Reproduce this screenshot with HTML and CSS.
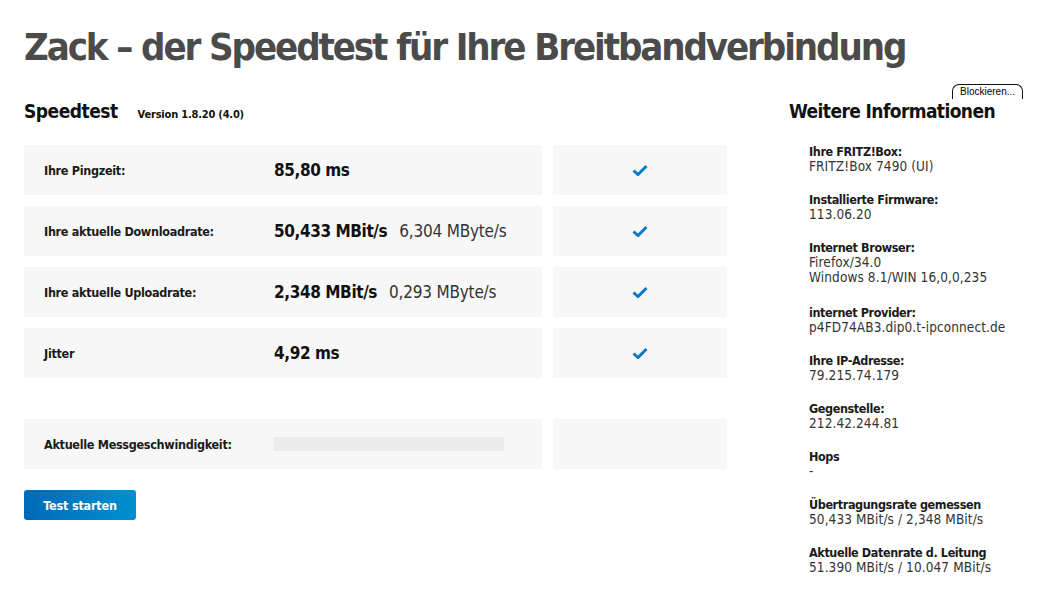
FILE: index.html
```html
<!DOCTYPE html>
<html lang="de">
<head>
<meta charset="utf-8">
<title>Zack – der Speedtest</title>
<link rel="stylesheet" href="styles.css">
</head>
<body>
<h1 class="title">Zack – der Speedtest für Ihre Breitbandverbindung</h1>
<div class="page">
  <main class="main">
    <div class="head">
      <h2 class="h2">Speedtest</h2>
      <span class="version">Version 1.8.20 (4.0)</span>
    </div>
    <div class="rows">
      <div class="row">
        <div class="cell-l"><span class="label">Ihre Pingzeit:</span><span class="val"><b>85,80 ms</b></span></div>
        <div class="cell-r"><svg class="check" viewBox="0 0 16 12" width="16" height="12"><path d="M1.5 6.5 L6 10.5 L14.5 2" fill="none" stroke="#0a78c4" stroke-width="3"/></svg></div>
      </div>
      <div class="row">
        <div class="cell-l"><span class="label">Ihre aktuelle Downloadrate:</span><span class="val"><b>50,433 MBit/s</b><span class="sec">6,304 MByte/s</span></span></div>
        <div class="cell-r"><svg class="check" viewBox="0 0 16 12" width="16" height="12"><path d="M1.5 6.5 L6 10.5 L14.5 2" fill="none" stroke="#0a78c4" stroke-width="3"/></svg></div>
      </div>
      <div class="row">
        <div class="cell-l"><span class="label">Ihre aktuelle Uploadrate:</span><span class="val"><b>2,348 MBit/s</b><span class="sec">0,293 MByte/s</span></span></div>
        <div class="cell-r"><svg class="check" viewBox="0 0 16 12" width="16" height="12"><path d="M1.5 6.5 L6 10.5 L14.5 2" fill="none" stroke="#0a78c4" stroke-width="3"/></svg></div>
      </div>
      <div class="row">
        <div class="cell-l"><span class="label">Jitter</span><span class="val"><b>4,92 ms</b></span></div>
        <div class="cell-r"><svg class="check" viewBox="0 0 16 12" width="16" height="12"><path d="M1.5 6.5 L6 10.5 L14.5 2" fill="none" stroke="#0a78c4" stroke-width="3"/></svg></div>
      </div>
      <div class="row row-speed">
        <div class="cell-l"><span class="label">Aktuelle Messgeschwindigkeit:</span><span class="val"><span class="bar"></span></span></div>
        <div class="cell-r"></div>
      </div>
    </div>
    <button class="btn">Test starten</button>
  </main>
  <aside class="side">
    <span class="block-btn">Blockieren...</span>
    <h2 class="h2">Weitere Informationen</h2>
    <dl class="info">
      <div class="item"><dt>Ihre FRITZ!Box:</dt><dd>FRITZ!Box 7490 (UI)</dd></div>
      <div class="item"><dt>Installierte Firmware:</dt><dd>113.06.20</dd></div>
      <div class="item item-tall"><dt>Internet Browser:</dt><dd>Firefox/34.0</dd><dd>Windows 8.1/WIN 16,0,0,235</dd></div>
      <div class="item"><dt>internet Provider:</dt><dd>p4FD74AB3.dip0.t-ipconnect.de</dd></div>
      <div class="item"><dt>Ihre IP-Adresse:</dt><dd>79.215.74.179</dd></div>
      <div class="item"><dt>Gegenstelle:</dt><dd>212.42.244.81</dd></div>
      <div class="item"><dt>Hops</dt><dd>-</dd></div>
      <div class="item"><dt>Übertragungsrate gemessen</dt><dd>50,433 MBit/s / 2,348 MBit/s</dd></div>
      <div class="item"><dt>Aktuelle Datenrate d. Leitung</dt><dd>51.390 MBit/s / 10.047 MBit/s</dd></div>
    </dl>
  </aside>
</div>
</body>
</html>
```
FILE: styles.css
```css
* { box-sizing: border-box; }
html, body { margin: 0; padding: 0; background: #fff; }
body {
  font-family: "DejaVu Sans Condensed", "DejaVu Sans", sans-serif;
  color: #1a1a1a;
  width: 1042px;
  height: 599px;
  overflow: hidden;
}
.title {
  margin: 0;
  padding: 23px 0 0 24px;
  font-size: 38px;
  line-height: 48px;
  font-weight: bold;
  color: #4b4b4b;
  letter-spacing: -2.1px;
  white-space: nowrap;
}
.page {
  display: flex;
  padding: 0 0 0 24px;
  margin-top: 27px;
}
.main { width: 703px; }
.head {
  display: flex;
  align-items: baseline;
  gap: 20px;
  height: 27px;
}
.h2 {
  margin: 0;
  font-size: 19px;
  line-height: 27px;
  font-weight: bold;
  color: #111;
  letter-spacing: -0.5px;
  white-space: nowrap;
}
.version {
  font-size: 11px;
  font-weight: bold;
  color: #111;
  letter-spacing: -0.2px;
}
.rows {
  margin-top: 20px;
  display: flex;
  flex-direction: column;
  gap: 11px;
}
.row {
  display: flex;
  gap: 11px;
  height: 50px;
}
.row-speed { margin-top: 30px; }
.cell-l {
  width: 519px;
  background: #f7f7f7;
  display: flex;
  align-items: center;
  padding-left: 20px;
}
.cell-r {
  width: 174px;
  background: #f7f7f7;
  display: flex;
  align-items: center;
  justify-content: center;
}
.label {
  width: 230px;
  font-size: 12.5px;
  font-weight: bold;
  letter-spacing: -0.3px;
  color: #1a1a1a;
}
.val {
  font-size: 17px;
  color: #111;
  display: flex;
  align-items: baseline;
}
.val b { font-weight: bold; letter-spacing: -0.4px; }
.sec { margin-left: 12px; color: #333; font-weight: normal; letter-spacing: -0.2px; }
.bar {
  display: block;
  width: 230px;
  height: 14px;
  background: #ebebeb;
}
.btn {
  margin-top: 21px;
  width: 112px;
  height: 30px;
  border: 0;
  border-radius: 3px;
  background: linear-gradient(to right, #0069b8, #0090d0);
  color: #fff;
  font-family: inherit;
  font-size: 12.5px;
  font-weight: bold;
  letter-spacing: -0.2px;
  padding: 0;
}
.side {
  position: relative;
  margin-left: 62px;
  width: 250px;
}
.side .h2 { letter-spacing: -0.6px; }
.block-btn {
  position: absolute;
  left: 163px;
  top: -14px;
  height: 15px;
  padding: 0 7px 0 7px;
  border: 1px solid #111;
  border-bottom: 0;
  border-radius: 7px 7px 0 0;
  font-family: "Liberation Sans", Arial, sans-serif;
  font-size: 10px;
  line-height: 14px;
  color: #000;
  background: #fff;
}
.info {
  margin: 19px 0 0 20px;
  padding: 0;
}
.item { margin-bottom: 18px; }
.item-tall { margin-bottom: 20px; }
dt {
  font-size: 12.5px;
  font-weight: bold;
  letter-spacing: -0.4px;
  line-height: 15px;
  color: #1a1a1a;
}
dd {
  margin: 0;
  font-size: 13.5px;
  letter-spacing: 0.1px;
  line-height: 15px;
  color: #333;
}
```
